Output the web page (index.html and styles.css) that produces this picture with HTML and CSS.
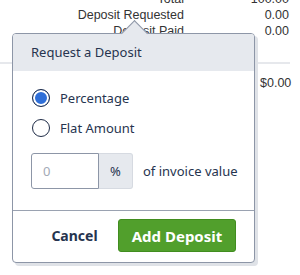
FILE: index.html
```html
<!DOCTYPE html>
<html lang="en">

<head>
  <meta name="viewport" content="width=device-width, initial-scale=1.0" />
  <title>Invoice</title>
  <link rel="stylesheet" href="styles.css">
</head>

<body>
  <div class="page">
    <div class="summary">
      <span class="label">Total</span><span class="value">100.00</span>
      <span class="label">Deposit Requested</span><span class="value">0.00</span>
      <span class="label">Deposit Paid</span><span class="value">0.00</span>
    </div>
    <hr class="rule" />
    <div class="balance">$0.00</div>

    <div class="popover">
      <div class="popover-header">Request a Deposit</div>
      <div class="popover-body">
        <label class="radio-row">
          <input type="radio" name="kind" checked />
          <span>Percentage</span>
        </label>
        <label class="radio-row">
          <input type="radio" name="kind" />
          <span>Flat Amount</span>
        </label>
        <div class="amount-row">
          <div class="input-group">
            <input type="text" placeholder="0" />
            <span class="addon">%</span>
          </div>
          <span class="hint">of invoice value</span>
        </div>
      </div>
      <div class="popover-footer">
        <button class="btn-link">Cancel</button>
        <button class="btn-primary">Add Deposit</button>
      </div>
    </div>
  </div>
</body>

</html>
```

FILE: styles.css
```css
* {
  padding: 0;
  margin: 0;
  box-sizing: border-box;
}

body {
  font-family: "Liberation Sans", Arial, sans-serif;
  color: #333;
  background: #fff;
}

.page {
  position: relative;
  width: 300px;
  height: 275px;
  overflow: hidden;
}

.summary {
  display: grid;
  grid-template-columns: 184px 105px;
  margin-top: -9px;
  font-size: 12.5px;
  line-height: 16px;
}

.summary .label,
.summary .value {
  text-align: right;
}

.rule {
  border: 0;
  height: 2px;
  background: #e6e8ec;
  margin-top: 23px;
  width: 290px;
}

.balance {
  margin: 12px 0 0 260px;
  font-size: 12.5px;
}

/* popover */
.popover {
  position: absolute;
  left: 12px;
  top: 33px;
  width: 243px;
  height: 230px;
  background: #fff;
  border: 1px solid #8d96a7;
  border-radius: 4px;
  box-shadow: 3px 3px 0 #dfe2e7;
  font-family: "Noto Sans", sans-serif;
  color: #26344f;
  display: flex;
  flex-direction: column;
}

.popover::before {
  content: "";
  position: absolute;
  left: 112px;
  top: -10px;
  width: 18px;
  height: 18px;
  background: #e6e9ee;
  border-top: 1px solid #8d96a7;
  border-left: 1px solid #8d96a7;
  transform: rotate(45deg);
}

.popover-header {
  height: 37px;
  background: #e6e9ee;
  border-radius: 3px 3px 0 0;
  padding-left: 18px;
  font-size: 13px;
  line-height: 37px;
}

.popover-body {
  padding: 18px 0 0 18px;
  border-bottom: 1px solid #9aa2b1;
  height: 140px;
}

.radio-row {
  display: flex;
  align-items: center;
  gap: 10px;
  height: 18px;
  margin-left: 1px;
  margin-bottom: 12px;
  font-size: 13px;
}

.radio-row input {
  appearance: none;
  width: 18px;
  height: 18px;
  border: 1.5px solid #1f2c47;
  border-radius: 50%;
  background: #fff;
}

.radio-row input:checked {
  background: #2f6fd8;
  box-shadow: inset 0 0 0 2px #fff;
}

.amount-row {
  display: flex;
  align-items: center;
  margin-top: 16px;
}

.input-group {
  display: flex;
  height: 36px;
}

.input-group input {
  width: 68px;
  border: 1px solid #8d96a7;
  border-radius: 3px 0 0 3px;
  padding-left: 11px;
  font-family: "Noto Sans", sans-serif;
  font-size: 13px;
  color: #26344f;
}

.input-group input::placeholder {
  color: #a3aab6;
}

.addon {
  width: 34px;
  background: #e6e9ee;
  border: 1px solid #d6dae1;
  border-left: 0;
  border-radius: 0 3px 3px 0;
  text-align: center;
  line-height: 34px;
  font-size: 13px;
}

.hint {
  margin-left: 10px;
  font-size: 13px;
}

.popover-footer {
  display: flex;
  align-items: center;
  padding: 8px 0 0 18px;
}

.btn-link {
  border: 0;
  background: none;
  width: 87px;
  text-align: center;
  font-family: "Noto Sans", sans-serif;
  font-weight: 700;
  font-size: 14px;
  color: #26344f;
}

.btn-primary {
  width: 118px;
  height: 33px;
  background: #519f2c;
  border: 1px solid #418d1f;
  border-radius: 3px;
  color: #fff;
  font-family: "Noto Sans", sans-serif;
  font-weight: 700;
  font-size: 15px;
}
```
